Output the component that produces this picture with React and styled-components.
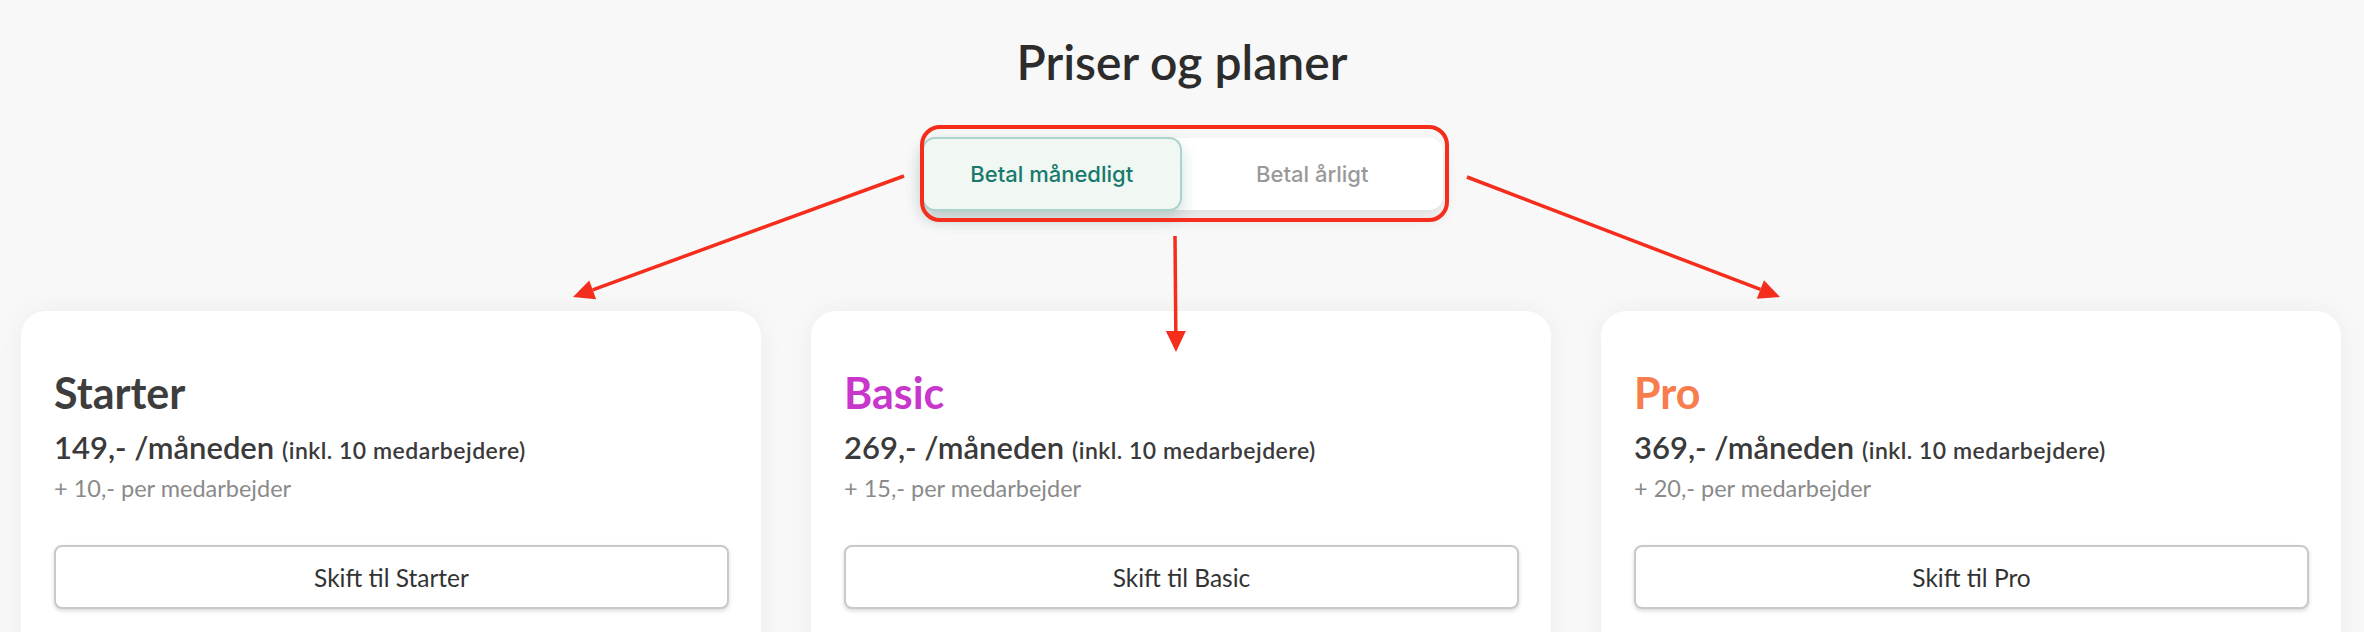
import React, { useState } from 'react';
import styled, { createGlobalStyle } from 'styled-components';

const GlobalStyle = createGlobalStyle`
  html, body {
    margin: 0;
    padding: 0;
    background: #f8f8f8;
  }
  * {
    box-sizing: border-box;
  }
`;

const Page = styled.div`
  position: relative;
  width: 2364px;
  height: 632px;
  overflow: hidden;
  background: #f8f8f8;
  display: flex;
  flex-direction: column;
  align-items: center;
  font-family: 'Lato', 'Liberation Sans', sans-serif;
`;

const Heading = styled.h1`
  margin: 34px 0 0;
  font-size: 48px;
  font-weight: 600;
  line-height: 56px;
  color: #2c2c2c;
`;

const ToggleWrap = styled.div`
  position: relative;
  margin-top: 48px;
`;

const Toggle = styled.div`
  display: flex;
  width: 521px;
  height: 72px;
  background: #fff;
  border-radius: 14px;
  box-shadow: 0 8px 18px rgba(0, 0, 0, 0.1);
`;

const ToggleButton = styled.button`
  flex: 1;
  margin: -1px 0;
  border-radius: 13px;
  border: 2px solid ${p => (p.$active ? '#a9d3cd' : 'transparent')};
  background: ${p => (p.$active ? '#f1f7f2' : 'transparent')};
  box-shadow: ${p => (p.$active ? '0 8px 16px rgba(30, 110, 100, 0.22)' : 'none')};
  color: ${p => (p.$active ? '#177a6d' : '#999')};
  font-family: 'Inter', 'Liberation Sans', sans-serif;
  font-size: 22px;
  font-weight: 500;
  cursor: pointer;
`;

// annotation box drawn over the toggle
const Highlight = styled.div`
  position: absolute;
  top: -13px;
  bottom: -12px;
  left: -2px;
  right: -6px;
  border: 4px solid #f42d1c;
  border-radius: 20px;
  pointer-events: none;
`;

const CardRow = styled.div`
  align-self: stretch;
  display: grid;
  grid-template-columns: repeat(3, 1fr);
  gap: 50px;
  padding: 0 23px 0 21px;
  margin-top: 101px;
`;

const Card = styled.div`
  background: #fff;
  border-radius: 25px;
  padding: 56px 32px 120px 33px;
  box-shadow: 0 0 28px rgba(0, 0, 0, 0.05);
`;

const PlanName = styled.h2`
  margin: 0;
  font-size: 43px;
  font-weight: 700;
  line-height: 52px;
  color: ${p => p.$color};
`;

const Price = styled.div`
  margin-top: 9px;
  font-size: 31px;
  font-weight: 600;
  line-height: 38px;
  color: #3a3a3a;
`;

const PriceNote = styled.span`
  font-size: 23px;
  font-weight: 600;
  letter-spacing: 0.5px;
`;

const Extra = styled.div`
  margin-top: 4px;
  font-size: 23.5px;
  color: #8a8a8a;
  line-height: 30px;
`;

const SwitchButton = styled.button`
  display: block;
  width: 100%;
  height: 64px;
  margin-top: 42px;
  background: #fff;
  border: 2px solid #c9c9c9;
  border-radius: 8px;
  box-shadow: 0 2px 4px rgba(0, 0, 0, 0.15);
  font-family: 'Lato', 'Liberation Sans', sans-serif;
  font-size: 24.5px;
  color: #333;
  cursor: pointer;
`;

const Overlay = styled.svg`
  position: absolute;
  top: 0;
  left: 0;
  pointer-events: none;
`;

const plans = [
  { name: 'Starter', color: '#3d3d3d', price: '149', extra: '10' },
  { name: 'Basic', color: '#c936cc', price: '269', extra: '15' },
  { name: 'Pro', color: '#f77d4d', price: '369', extra: '20' },
];

function Arrow({ x1, y1, x2, y2 }) {
  const dx = x2 - x1;
  const dy = y2 - y1;
  const len = Math.sqrt(dx * dx + dy * dy);
  const ux = dx / len;
  const uy = dy / len;
  const bx = x2 - ux * 21;
  const by = y2 - uy * 21;
  const nx = -uy * 10;
  const ny = ux * 10;
  return (
    <g>
      <line x1={x1} y1={y1} x2={bx} y2={by} stroke="#f42d1c" strokeWidth="3.5" />
      <polygon
        points={`${x2},${y2} ${bx + nx},${by + ny} ${bx - nx},${by - ny}`}
        fill="#f42d1c"
      />
    </g>
  );
}

export default function App() {
  const [yearly, setYearly] = useState(false);

  return (
    <Page>
      <GlobalStyle />
      <Heading>Priser og planer</Heading>
      <ToggleWrap>
        <Toggle>
          <ToggleButton $active={!yearly} onClick={() => setYearly(false)}>
            Betal månedligt
          </ToggleButton>
          <ToggleButton $active={yearly} onClick={() => setYearly(true)}>
            Betal årligt
          </ToggleButton>
        </Toggle>
        <Highlight />
      </ToggleWrap>
      <CardRow>
        {plans.map(plan => (
          <Card key={plan.name}>
            <PlanName $color={plan.color}>{plan.name}</PlanName>
            <Price>
              {plan.price},- /måneden <PriceNote>(inkl. 10 medarbejdere)</PriceNote>
            </Price>
            <Extra>+ {plan.extra},- per medarbejder</Extra>
            <SwitchButton>Skift til {plan.name}</SwitchButton>
          </Card>
        ))}
      </CardRow>
      <Overlay width="2364" height="632">
        <Arrow x1={904} y1={176} x2={573} y2={297} />
        <Arrow x1={1175} y1={236} x2={1176} y2={352} />
        <Arrow x1={1467} y1={177} x2={1780} y2={297} />
      </Overlay>
    </Page>
  );
}
